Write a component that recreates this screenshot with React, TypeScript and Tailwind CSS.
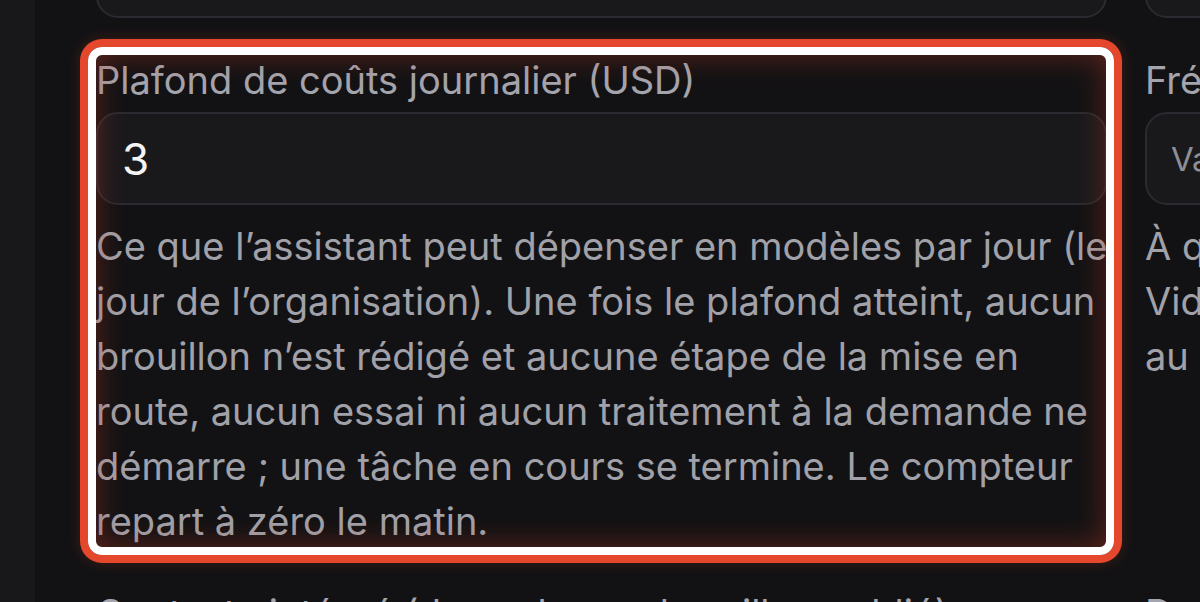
import type { ReactNode } from "react"

const FONT = "font-['Inter','Noto_Sans',sans-serif]"

const COST_HELP = [
  "Ce que l’assistant peut dépenser en modèles par jour (le",
  "jour de l’organisation). Une fois le plafond atteint, aucun",
  "brouillon n’est rédigé et aucune étape de la mise en",
  "route, aucun essai ni aucun traitement à la demande ne",
  "démarre ; une tâche en cours se termine. Le compteur",
  "repart à zéro le matin.",
]

const FREQ_HELP = [
  "À quelle fréquence l’assistant prépare un nouveau brouillon.",
  "Vide = valeur par défaut de l’organisation, soit une fois par jour,",
  "au plus tôt le matin.",
]

function Field({
  label,
  value,
  placeholder,
  help,
  small,
}: {
  label: string
  value?: string
  placeholder?: string
  help?: string[]
  small?: boolean
}) {
  return (
    <div className="flex flex-col">
      <label className="whitespace-nowrap text-[38px] leading-[48px] text-[#a4a4ad]">{label}</label>
      <input
        readOnly
        value={value ?? ""}
        placeholder={placeholder}
        className={`mt-[8px] h-[93px] w-full rounded-[22px] border-2 border-[#2a2a30] bg-[#19191c] px-[24px] text-[#f4f4f5] outline-none placeholder:text-[#8e8e96] ${
          small ? "text-[33px]" : "text-[44px]"
        }`}
      />
      {help && (
        <p className="mt-[14px] text-[38px] leading-[55px] text-[#a1a1a9]">
          {help.map(line => (
            <span key={line} className="block whitespace-nowrap">
              {line}
            </span>
          ))}
        </p>
      )}
    </div>
  )
}

function Highlight({ children }: { children: ReactNode }) {
  return (
    <div className="relative">
      {children}
      <div className="pointer-events-none absolute -top-[9px] -left-[8px] -right-[7px] -bottom-[6px] rounded-[14px] border-[8px] border-white shadow-[0_0_0_8px_#e4472b,0_0_14px_8px_rgba(228,71,43,0.22),inset_0_0_30px_rgba(190,60,35,0.45)]" />
    </div>
  )
}

export default function App() {
  return (
    <div className={`flex h-[602px] w-[1200px] overflow-hidden bg-[#121214] ${FONT}`}>
      <div className="w-[35px] shrink-0 bg-[#18181b]" />
      <main className="min-w-0 flex-1 pl-[61px]">
        <div className="-mt-[131px] grid grid-cols-[1011px_1011px] gap-[38px]">
          <Field label="Fuseau horaire de l’organisation" value="Europe/Paris" />
          <Field label="Langue des brouillons" value="Français" />

          <Highlight>
            <Field label="Plafond de coûts journalier (USD)" value="3" help={COST_HELP} />
          </Highlight>
          <Field label="Fréquence des brouillons" placeholder="Valeur par défaut" help={FREQ_HELP} small />

          <div className="mt-[2px]">
            <Field label="Contexte intégré (dans chaque brouillon publié)" value="" />
          </div>
          <div className="mt-[2px]">
            <Field label="Durée de conservation" value="" />
          </div>
        </div>
      </main>
    </div>
  )
}
